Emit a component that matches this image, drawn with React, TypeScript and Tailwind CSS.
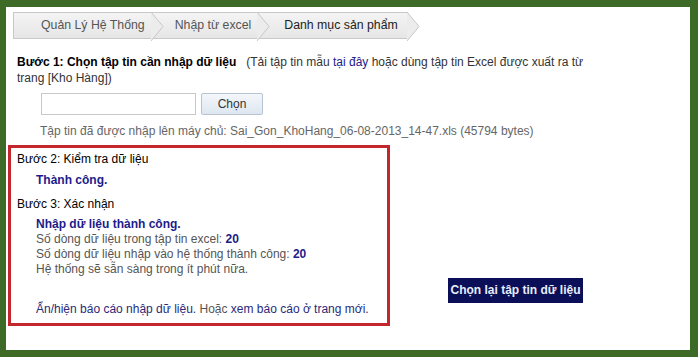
import React from "react";

function Crumb({ label, active, first }: { label: string; active?: boolean; first?: boolean }) {
  return (
    <div className={`relative flex h-full shrink-0 items-center whitespace-nowrap ${first ? "pl-[27px]" : active ? "pl-[26px]" : "pl-[23px]"} ${active ? "pr-[10px] text-[#222]" : "pr-[7px] text-[#555]"}`}>
      <span className="relative z-10">{label}</span>
      <svg className="absolute right-[-12px] top-[-1px] z-20" width="13" height="29" viewBox="0 0 13 29">
        <polygon points="0,0 12,14.5 0,29" fill="#ececec" />
        <polyline points="0,0 12,14.5 0,29" fill="none" stroke="#c8c8c8" strokeWidth="1" />
      </svg>
    </div>
  );
}

export default function App() {
  return (
    <div
      className="h-[357px] w-[698px] bg-[#3e6a27] pl-[6px] pr-[8px] pt-[7px] pb-[7px] text-[12px] leading-[15px]"
      style={{ fontFamily: '"Liberation Sans", Arial, sans-serif' }}
    >
      <div className="h-full w-full bg-white pl-[7px] pt-[5px]">
        {/* breadcrumb */}
        <div className="flex h-[27px] w-fit border border-r-0 border-[#c8c8c8] bg-gradient-to-b from-[#f4f4f4] to-[#e6e6e6] text-[12.3px]">
          <Crumb label="Quản Lý Hệ Thống" first />
          <Crumb label="Nhập từ excel" />
          <Crumb label="Danh mục sản phẩm" active />
        </div>

        {/* step 1 */}
        <div className="mt-[15px] w-[590px] pl-[4px] leading-[16px] text-[#333]">
          <span className="font-bold text-black">Bước 1: Chọn tập tin cần nhập dữ liệu</span>
          <span className="ml-[10px]">(Tải tập tin mẫu </span>
          <span className="text-[#1a1a8c]">tại đây</span>
          <span> hoặc dùng tập tin Excel được xuất ra từ trang [Kho Hàng])</span>
        </div>
        <div className="mt-[7px] flex items-center pl-[28px]">
          <div className="h-[22px] w-[155px] border border-[#c8c8c8] bg-white" />
          <button className="ml-[5px] h-[22px] w-[62px] rounded-[2px] border border-[#b8c4d2] bg-gradient-to-b from-[#f4f7fb] to-[#dde6f0] text-[#333]">
            Chọn
          </button>
        </div>
        <div className="mt-[9px] pl-[27px] text-[#666]">
          Tập tin đã được nhập lên máy chủ: Sai_Gon_KhoHang_06-08-2013_14-47.xls (45794 bytes)
        </div>

        {/* result */}
        <div className="flex items-start">
          <div className="ml-[-5px] mt-[6px] h-[181px] w-[382px] border-[3px] border-[#c4262e] pl-[6px] pt-[4px]">
            <div className="text-black">Bước 2: Kiểm tra dữ liệu</div>
            <div className="mt-[6px] pl-[19px] font-bold text-[#1c1c8a]">Thành công.</div>
            <div className="mt-[9px] text-black">Bước 3: Xác nhận</div>
            <div className="mt-[5px] pl-[19px] text-[#555]">
              <div className="font-bold text-[#1c1c8a]">Nhập dữ liệu thành công.</div>
              <div>
                Số dòng dữ liệu trong tập tin excel: <span className="font-bold text-[#1c1c8a]">20</span>
              </div>
              <div>
                Số dòng dữ liệu nhập vào hệ thống thành công: <span className="font-bold text-[#1c1c8a]">20</span>
              </div>
              <div>Hệ thống sẽ sẵn sàng trong ít phút nữa.</div>
              <div className="mt-[25px]">
                <span className="text-[#2a2a7a]">Ẩn/hiện báo cáo nhập dữ liệu.</span> Hoặc{" "}
                <span className="text-[#2a2a7a]">xem báo cáo ở trang mới.</span>
              </div>
            </div>
          </div>
          <button className="ml-[58px] mt-[139px] h-[25px] w-[135px] bg-[#0a0f58] text-[12px] font-bold text-[#e8eef8]">
            Chọn lại tập tin dữ liệu
          </button>
        </div>
      </div>
    </div>
  );
}
